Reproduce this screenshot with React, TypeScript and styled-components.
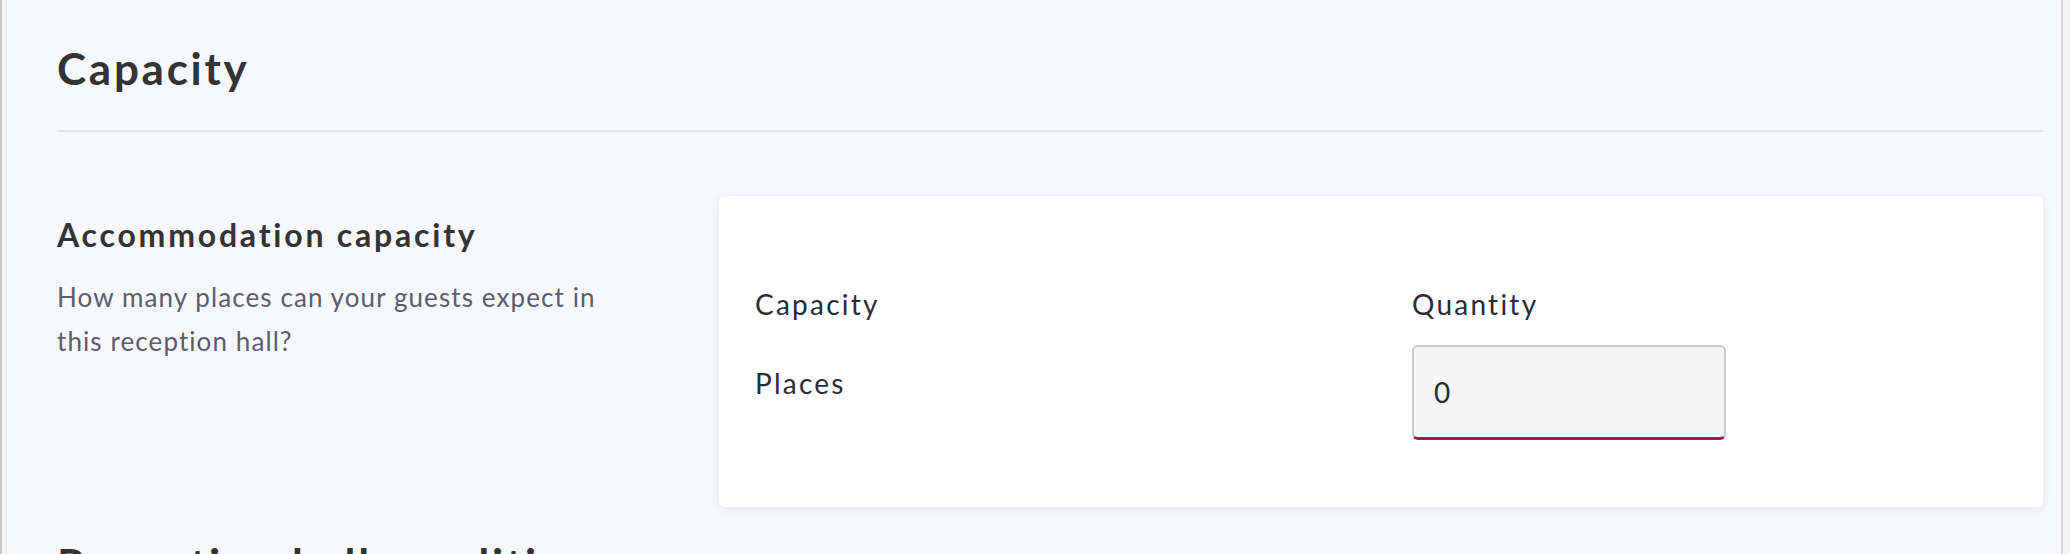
import styled, { createGlobalStyle } from "styled-components";

/* --------------------------------------------------------
   GLOBAL
-------------------------------------------------------- */
const GlobalStyle = createGlobalStyle`
  html, body {
    margin: 0;
    padding: 0;
    background: #f4f4f4;
    font-family: "Lato", "Open Sans", sans-serif;
    color: #333333;
    overflow: hidden;
  }
  * { box-sizing: border-box; }
`;

/* --------------------------------------------------------
   STYLES
-------------------------------------------------------- */
const Shell = styled.div`
  min-height: 100vh;
  border-left: 2px solid #c6c6c6;
  padding: 0 7px 0 4px;
  display: flex;
`;

const Panel = styled.main`
  flex: 1;
  min-height: 100vh;
  background: #f7f8fc;
  border-left: 1px solid #e6e6e6;
  border-right: 2px solid #d9d9dc;
  padding: 42px 18px 0 50px;
`;

const SectionTitle = styled.h2<{ $spaced?: boolean }>`
  margin: ${(p) => (p.$spaced ? "31px 0 0" : "0")};
  font-size: 44px;
  line-height: 1.2;
  font-weight: 700;
  letter-spacing: 0.062em;
  color: #333333;
  white-space: nowrap;
`;

const Divider = styled.hr`
  margin: 35px 0 0;
  border: 0;
  height: 2px;
  background: #dde2f4;
`;

const Row = styled.section`
  display: grid;
  grid-template-columns: 1fr 2fr;
  margin-top: 64px;
`;

const Intro = styled.div`
  padding: 20px 40px 0 0;
`;

const IntroTitle = styled.h3`
  margin: 0;
  font-size: 32px;
  line-height: 1.2;
  font-weight: 700;
  letter-spacing: 0.087em;
  color: #333333;
`;

const IntroText = styled.p`
  margin: 21px 0 0;
  font-size: 26px;
  line-height: 44px;
  letter-spacing: 0.042em;
  color: #5c5c6e;
  max-width: 570px;
`;

const Card = styled.div`
  background: #ffffff;
  border-radius: 6px;
  box-shadow: 0 2px 10px rgba(30, 35, 70, 0.08);
  padding: 87px 36px 67px;
`;

const Table = styled.div`
  display: grid;
  grid-template-columns: 595px 1fr;
  column-gap: 62px;
  row-gap: 20px;
`;

const HeadCell = styled.div`
  font-size: 28px;
  line-height: 1.5;
  letter-spacing: 0.08em;
  color: #2b2b33;
`;

const Cell = styled(HeadCell)`
  padding-top: 17px;
`;

const NumberInput = styled.input`
  width: 314px;
  height: 95px;
  padding: 0 20px;
  background: #f5f5f5;
  border: 2px solid #c9c9ce;
  border-bottom: 3px solid #a8145a;
  border-radius: 6px;
  font-family: inherit;
  font-size: 28px;
  color: #2b2b33;
  outline: none;
`;

export default function App() {
  return (
    <>
      <GlobalStyle />
      <Shell>
        <Panel>
          <SectionTitle>Capacity</SectionTitle>
          <Divider />

          <Row>
            <Intro>
              <IntroTitle>Accommodation capacity</IntroTitle>
              <IntroText>How many places can your guests expect in this reception hall?</IntroText>
            </Intro>

            <Card>
              <Table>
                <HeadCell>Capacity</HeadCell>
                <HeadCell>Quantity</HeadCell>
                <Cell>Places</Cell>
                <div>
                  <NumberInput type="text" defaultValue="0" />
                </div>
              </Table>
            </Card>
          </Row>

          <SectionTitle $spaced>Reception hall conditions</SectionTitle>
        </Panel>
      </Shell>
    </>
  );
}
